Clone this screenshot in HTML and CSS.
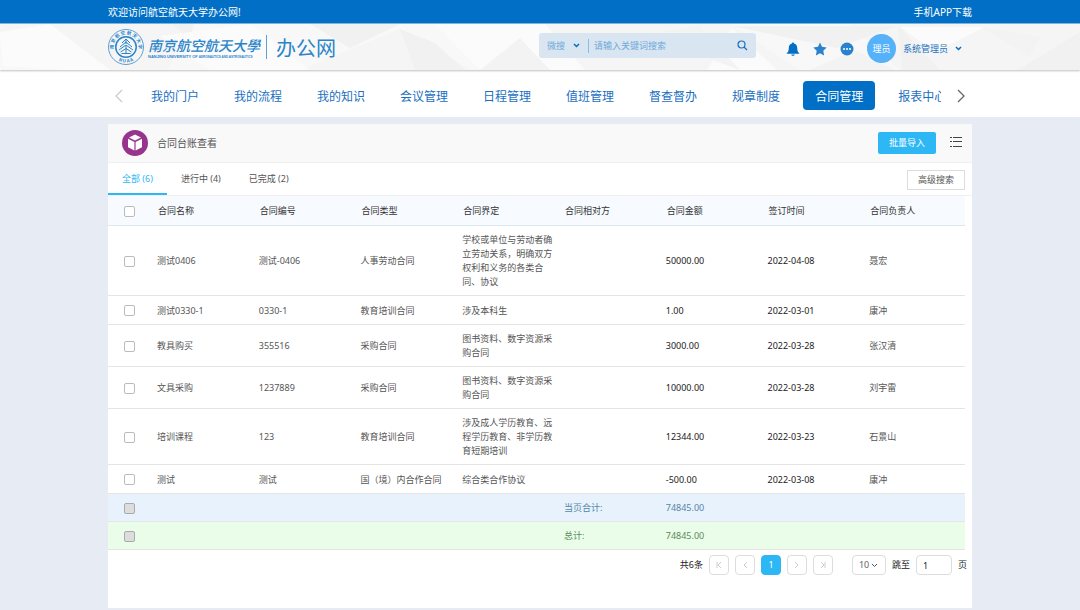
FILE: index.html
```html
<!DOCTYPE html>
<html lang="zh-CN">
<head>
    <meta charset="UTF-8">
    <meta name="viewport" content="width=device-width, initial-scale=1.0">
    <title>合同台账查看</title>
    <link rel="stylesheet" href="styles.css">
</head>
<body>
    <div class="topbar">
        <div class="container topbar-inner">
            <span>欢迎访问航空航天大学办公网!</span>
            <a href="#">手机APP下载</a>
        </div>
    </div>

    <header class="header">
        <svg class="header-bg" viewBox="0 0 1080 46" preserveAspectRatio="none" aria-hidden="true">
            <path fill="#f5f5f5" d="M0 0h190l-22 46H70L3 25zM300 46 400 5l70 41zM540 0h190l70 46H580zM850 0h230v46H900z"/>
            <path fill="#f1f1f1" d="M172 0h22l-4 16zM310 0h90l-50 24zM400 5l35 14 30 27h-50zM732 2h165l-60 22zM898 2l42 44h-38zM1018 46l62-38v38z"/>
            <path fill="#fbfbfb" d="M0 8 50 0 110 46H66L3 42zM160 12 250 0l60 46H210zM435 0h110l40 46H480zM732 4l45 42h-70zM900 3l85 0-50 25z"/>
            <path fill="#f3f3f3" d="M480 46 520 14l30 32zM640 10l60-8 40 44zM810 46l45-20 40 20zM980 3l60 10-10 20z"/>
        </svg>
        <div class="container header-inner">
            <a class="brand" href="#">
                <svg class="seal" viewBox="0 0 72 72" fill="none" stroke="#2a84c9" aria-hidden="true">
                    <defs>
                        <path id="ring-top" d="M15 49.500A25 25 0 1 1 57 49.500"/>
                        <path id="ring-bottom" d="M8 50A31.500 31.500 0 0 0 64 50"/>
                    </defs>
                    <circle cx="36" cy="36" r="35" stroke-width="1.500"/>
                    <circle cx="36" cy="36" r="20.500" stroke-width="3"/>
                    <g fill="#2a84c9" stroke="none" font-family="Noto Sans CJK SC, sans-serif" font-weight="700">
                        <text font-size="9"><textPath href="#ring-top" startOffset="50%" text-anchor="middle">南 京 航 空 航 天 大 学</textPath></text>
                        <text font-size="9"><textPath href="#ring-bottom" startOffset="50%" text-anchor="middle">N U A A</textPath></text>
                    </g>
                    <path stroke-width="2" d="M36 20v10M36 20l-8 8M36 20l8 8M36 26l-12 10M36 26l12 10M36 32 22 42M36 32l14 10M36 39l-11 7M36 39l11 7M27 49h18M36 34v15"/>
                </svg>
                <span class="brand-name">
                    <span class="brand-cn">南京航空航天大學</span>
                    <span class="brand-en">NANJING UNIVERSITY OF <small>AERONAUTICS AND ASTRONAUTICS</small></span>
                </span>
                <span class="brand-site">办公网</span>
            </a>

            <form class="search">
                <select class="search-type" aria-label="搜索类型">
                    <option>微搜</option>
                </select>
                <svg class="caret" viewBox="0 0 7 5" aria-hidden="true"><path d="M1 1l2.500 2.500L6 1"/></svg>
                <input class="search-input" type="text" placeholder="请输入关键词搜索" aria-label="关键词">
                <button class="icon-btn" type="button" aria-label="搜索">
                    <svg width="11" height="11" viewBox="0 0 11 11" fill="none" stroke="#1a70bf" stroke-width="1.200"><circle cx="4.500" cy="4.500" r="3.500"/><path d="M7 7l3 3"/></svg>
                </button>
            </form>

            <div class="tools">
                <button class="icon-btn" type="button" aria-label="消息">
                    <svg width="14" height="14" viewBox="0 0 14 14" fill="#006fc5"><path d="M7 0.500c.6 0 1 .4 1 1 2 .5 3.200 2 3.200 4.200 0 2.800.5 4.200 2 5.300v.7H.8V11c1.500-1.100 2-2.500 2-5.300C2.800 3.500 4 2 6 1.500c0-.6.4-1 1-1zM5.200 12.400h3.600c-.2.800-.9 1.300-1.800 1.300s-1.600-.5-1.800-1.300z"/></svg>
                </button>
                <button class="icon-btn" type="button" aria-label="收藏">
                    <svg width="14" height="14" viewBox="0 0 14 14" fill="#2a82cf"><path d="M7 .5l2 4.300 4.700.6-3.400 3.300.8 4.800L7 11.200l-4.100 2.300.8-4.800L.3 5.400 5 4.800z"/></svg>
                </button>
                <button class="icon-btn" type="button" aria-label="更多">
                    <svg width="14" height="14" viewBox="0 0 14 14"><circle cx="7" cy="7" r="6.500" fill="#2a82cf"/><g fill="#fff"><circle cx="4" cy="7" r="1"/><circle cx="7" cy="7" r="1"/><circle cx="10" cy="7" r="1"/></g></svg>
                </button>
                <button class="user" type="button">
                    <span class="avatar">理员</span>
                    <span>系统管理员</span>
                    <svg class="caret" viewBox="0 0 7 5" aria-hidden="true"><path d="M1 1l2.500 2.500L6 1"/></svg>
                </button>
            </div>
        </div>
    </header>

    <nav class="nav">
        <div class="container nav-inner">
            <button class="nav-arrow prev" type="button" aria-label="上一页">
                <svg width="8" height="14" viewBox="0 0 8 14"><path d="M7 1 1 7l6 6"/></svg>
            </button>
            <div class="nav-list">
                <a href="#">我的门户</a>
                <a href="#">我的流程</a>
                <a href="#">我的知识</a>
                <a href="#">会议管理</a>
                <a href="#">日程管理</a>
                <a href="#">值班管理</a>
                <a href="#">督查督办</a>
                <a href="#">规章制度</a>
                <a href="#" class="active">合同管理</a>
                <a href="#">报表中心</a>
            </div>
            <button class="nav-arrow next" type="button" aria-label="下一页">
                <svg width="8" height="14" viewBox="0 0 8 14"><path d="M1 1l6 6-6 6"/></svg>
            </button>
        </div>
    </nav>

    <main class="container card">
        <div class="card-head">
            <svg class="card-icon" viewBox="0 0 26 26" aria-hidden="true">
                <circle cx="13" cy="13" r="13" fill="#97358d"/>
                <path fill="#fff" d="M13 4.500l6 3-6 3-6-3zM6 8.800l6.400 3.200v8.500L6 17.300zM20 8.800 13.600 12v8.500l6.400-3.200z"/>
            </svg>
            <h1>合同台账查看</h1>
            <button class="btn-primary" type="button">批量导入</button>
            <button class="icon-btn list-btn" type="button" aria-label="列表">
                <svg width="12" height="12" viewBox="0 0 12 12" fill="#444"><path d="M0 1h2v1H0zM3 1h9v1H3zM0 5h2v1H0zM3 5h9v1H3zM0 10h2v1H0zM3 10h9v1H3z"/></svg>
            </button>
        </div>

        <div class="tabs">
            <a href="#" class="active">全部 (6)</a>
            <a href="#">进行中 (4)</a>
            <a href="#">已完成 (2)</a>
            <button class="btn-default" type="button">高级搜索</button>
        </div>

        <div class="table-wrap">
            <table>
                <thead>
                    <tr>
                        <th class="check"><input type="checkbox" aria-label="全选"></th>
                        <th>合同名称</th>
                        <th>合同编号</th>
                        <th>合同类型</th>
                        <th>合同界定</th>
                        <th>合同相对方</th>
                        <th>合同金额</th>
                        <th>签订时间</th>
                        <th>合同负责人</th>
                    </tr>
                </thead>
                <tbody>
                    <tr>
                        <td class="check"><input type="checkbox" aria-label="测试0406"></td>
                        <td>测试0406</td>
                        <td>测试-0406</td>
                        <td>人事劳动合同</td>
                        <td>学校或单位与劳动者确立劳动关系，明确双方权利和义务的各类合同、协议</td>
                        <td></td>
                        <td class="dark">50000.00</td>
                        <td class="dark">2022-04-08</td>
                        <td>聂宏</td>
                    </tr>
                    <tr>
                        <td class="check"><input type="checkbox" aria-label="测试0330-1"></td>
                        <td>测试0330-1</td>
                        <td>0330-1</td>
                        <td>教育培训合同</td>
                        <td>涉及本科生</td>
                        <td></td>
                        <td class="dark">1.00</td>
                        <td class="dark">2022-03-01</td>
                        <td>康冲</td>
                    </tr>
                    <tr>
                        <td class="check"><input type="checkbox" aria-label="教具购买"></td>
                        <td>教具购买</td>
                        <td>355516</td>
                        <td>采购合同</td>
                        <td>图书资料、数字资源采购合同</td>
                        <td></td>
                        <td class="dark">3000.00</td>
                        <td class="dark">2022-03-28</td>
                        <td>张汉清</td>
                    </tr>
                    <tr>
                        <td class="check"><input type="checkbox" aria-label="文具采购"></td>
                        <td>文具采购</td>
                        <td>1237889</td>
                        <td>采购合同</td>
                        <td>图书资料、数字资源采购合同</td>
                        <td></td>
                        <td class="dark">10000.00</td>
                        <td class="dark">2022-03-28</td>
                        <td>刘宇雷</td>
                    </tr>
                    <tr>
                        <td class="check"><input type="checkbox" aria-label="培训课程"></td>
                        <td>培训课程</td>
                        <td>123</td>
                        <td>教育培训合同</td>
                        <td>涉及成人学历教育、远程学历教育、非学历教育短期培训</td>
                        <td></td>
                        <td class="dark">12344.00</td>
                        <td class="dark">2022-03-23</td>
                        <td>石景山</td>
                    </tr>
                    <tr>
                        <td class="check"><input type="checkbox" aria-label="测试"></td>
                        <td>测试</td>
                        <td>测试</td>
                        <td>国（境）内合作合同</td>
                        <td>综合类合作协议</td>
                        <td></td>
                        <td class="dark">-500.00</td>
                        <td class="dark">2022-03-08</td>
                        <td>康冲</td>
                    </tr>
                </tbody>
                <tfoot>
                    <tr class="page-sum">
                        <td class="check"><input type="checkbox" aria-label="当页合计" disabled></td>
                        <td></td><td></td><td></td><td></td>
                        <td>当页合计:</td>
                        <td>74845.00</td>
                        <td></td><td></td>
                    </tr>
                    <tr class="total-sum">
                        <td class="check"><input type="checkbox" aria-label="总计" disabled></td>
                        <td></td><td></td><td></td><td></td>
                        <td>总计:</td>
                        <td>74845.00</td>
                        <td></td><td></td>
                    </tr>
                </tfoot>
            </table>
        </div>

        <div class="pager">
            <span>共6条</span>
            <button type="button" aria-label="首页" disabled><svg viewBox="0 0 8 8"><path d="M2 1v6M6 1 3 4l3 3"/></svg></button>
            <button type="button" aria-label="上一页" disabled><svg viewBox="0 0 8 8"><path d="M6 1 3 4l3 3"/></svg></button>
            <button type="button" class="current">1</button>
            <button type="button" aria-label="下一页" disabled><svg viewBox="0 0 8 8"><path d="M2 1l3 3-3 3"/></svg></button>
            <button type="button" aria-label="末页" disabled><svg viewBox="0 0 8 8"><path d="M2 1l3 3-3 3M6 1v6"/></svg></button>
            <div class="page-size">
                <select aria-label="每页条数">
                    <option>10</option>
                </select>
                <svg viewBox="0 0 7 5" aria-hidden="true"><path d="M1 1l2.500 2.500L6 1"/></svg>
            </div>
            <label for="jump">跳至</label>
            <input id="jump" type="text" value="1">
            <span>页</span>
        </div>
    </main>
</body>
</html>
```
FILE: styles.css
```css
* {
    box-sizing: border-box;
}

body {
    margin: 0;
    background: #e6ebf4;
    color: #555;
    font-family: "Noto Sans", "Noto Sans CJK SC", sans-serif;
    font-size: 9px;
    line-height: 14px;
}

a {
    color: inherit;
    text-decoration: none;
}

button, input, select {
    font: inherit;
    color: inherit;
    margin: 0;
    padding: 0;
    border: 0;
    background: none;
    outline: none;
}

button {
    cursor: pointer;
}

svg {
    display: block;
}

select {
    appearance: none;
}

.container {
    width: 80%;
    margin: 0 auto;
}

.icon-btn {
    display: flex;
}

.caret {
    width: 7px;
    height: 5px;
    fill: none;
    stroke: #006fc5;
    stroke-width: 1.5;
}

/* top bar */
.topbar {
    background: #006fc5;
    color: #fff;
    font-size: 10px;
    border-bottom: 1px solid #7fb7e2;
}

.topbar-inner {
    display: flex;
    justify-content: space-between;
    align-items: center;
    height: 23px;
}

/* header */
.header {
    position: relative;
    background: #f8f8f8;
    box-shadow: 0 1px 2px rgba(0, 0, 0, 0.25);
}

.header-bg {
    position: absolute;
    top: 0;
    left: 0;
    width: 100%;
    height: 100%;
}

.header-inner {
    position: relative;
    display: flex;
    align-items: center;
    height: 46px;
}

.brand {
    display: flex;
    align-items: center;
    color: #2a84c9;
}

.seal {
    width: 36px;
    height: 36px;
}

.brand-name {
    display: flex;
    flex-direction: column;
    margin-left: 4px;
    padding-right: 6px;
    border-right: 1px solid #5b9fd6;
}

.brand-cn {
    font-family: "Noto Sans CJK TC", sans-serif;
    font-size: 14px;
    font-style: italic;
    font-weight: 500;
    line-height: 20px;
}

.brand-en {
    font-family: "Liberation Sans Narrow", "Liberation Sans", sans-serif;
    font-size: 4px;
    font-weight: 700;
    line-height: 4px;
    width: 112px;
    white-space: nowrap;
}

.brand-en small {
    font-size: 3px;
}

.brand-site {
    margin-left: 9px;
    padding-top: 4px;
    font-size: 20px;
    line-height: 24px;
}

.search {
    display: flex;
    align-items: center;
    width: 217px;
    height: 25px;
    margin: 0 0 3px auto;
    padding: 0 8px;
    border-radius: 3px;
    background: #d9e5f1;
    color: #6faadb;
}

.search-type {
    width: 26px;
}

.search-input {
    flex: 1;
    min-width: 0;
    margin-left: 8px;
    padding-left: 5px;
    border-left: 1px solid #8dbbe2;
}

.search-input::placeholder {
    color: #6faadb;
    opacity: 1;
}

.tools {
    display: flex;
    align-items: center;
    gap: 13px;
    margin-left: 30px;
    padding: 3px 10px 0 0;
}

.user {
    display: flex;
    align-items: center;
    gap: 7px;
    color: #1a70bf;
}

.avatar {
    width: 29px;
    height: 29px;
    border-radius: 50%;
    background: #55b1f9;
    color: #fff;
    line-height: 29px;
    text-align: center;
}

/* navigation */
.nav {
    padding: 11px 0 7px;
    background: #fff;
}

.nav-inner {
    display: flex;
}

.nav-arrow {
    display: flex;
    align-items: center;
    width: 31px;
    padding: 0 7px;
}

.nav-arrow svg {
    fill: none;
    stroke: #666;
    stroke-width: 1.3;
}

.nav-arrow.prev svg {
    stroke: #ccc;
}

.nav-arrow.next {
    justify-content: flex-end;
}

.nav-list {
    display: flex;
    flex: 1;
    gap: 11px;
    min-width: 0;
    overflow: hidden;
}

.nav-list a {
    flex: none;
    padding: 2px 12px 0;
    border-radius: 4px;
    color: #1a70bf;
    font-size: 12px;
    line-height: 27px;
}

.nav-list a.active {
    background: #006fc5;
    color: #fff;
}

/* card */
.card {
    margin-top: 7px;
    margin-bottom: 2px;
    padding-bottom: 33px;
    background: #fff;
}

.card-head {
    display: flex;
    align-items: center;
    height: 39px;
    padding: 0 10px 0 14px;
    background: #f9f9f9;
    border-bottom: 1px solid #f0f0f0;
}

.card-icon {
    width: 26px;
    height: 26px;
}

.card-head h1 {
    margin: 0 auto 0 9px;
    font-size: 10px;
    font-weight: 400;
}

.list-btn {
    padding-bottom: 2px;
}

.btn-primary {
    height: 22px;
    margin-right: 14px;
    padding: 0 11px;
    border-radius: 2px;
    background: #2db7f5;
    color: #fff;
}

.btn-default {
    height: 20px;
    margin: 2px 0 0 auto;
    padding: 0 10px;
    border: 1px solid #ddd;
    background: #fff;
}

.tabs {
    display: flex;
    align-items: center;
    padding-right: 7px;
    border-bottom: 1px solid #f0f0f0;
}

.tabs a {
    padding: 2px 14px 0;
    border-bottom: 2px solid transparent;
    line-height: 28px;
}

.tabs a.active {
    border-color: #2db7f5;
    color: #2db7f5;
}

/* table */
.table-wrap {
    padding-right: 7px;
}

table {
    width: 100%;
    table-layout: fixed;
    border-collapse: separate;
    border-spacing: 0;
}

th, td {
    padding: 7px 4px 6px 6px;
    border-bottom: 1px solid #e5e5e5;
    text-align: left;
    vertical-align: middle;
    font-weight: 400;
}

th {
    height: 30px;
    padding-left: 7px;
    background: #f7fbff;
    border-color: #dbe8f1;
    color: #333;
}

td {
    height: 29px;
}

tfoot td {
    height: 28px;
}

.check {
    width: 43px;
    padding-left: 0;
    padding-right: 0;
    text-align: center;
}

.check input {
    display: block;
    appearance: none;
    width: 11px;
    height: 11px;
    margin: 0 auto;
    border: 1px solid #bbb;
    border-radius: 2px;
    background: #fff;
}

.check input:disabled {
    border-color: #aaa;
    background: #ddd;
}

.dark {
    color: #222;
}

.page-sum td {
    background: #e7f2fc;
    color: #5586a8;
}

.total-sum td {
    background: #eafde8;
    color: #5c8a5c;
}

/* pagination */
.pager {
    display: flex;
    justify-content: flex-end;
    align-items: center;
    gap: 6px;
    padding: 5px 5px 0 0;
    color: #222;
}

.pager button,
.pager input,
.page-size {
    height: 20px;
    border: 1px solid #ddd;
    border-radius: 4px;
}

.pager button {
    display: flex;
    align-items: center;
    justify-content: center;
    width: 20px;
}

.pager button.current {
    border-color: #2db7f5;
    background: #2db7f5;
    color: #fff;
}

.pager svg {
    width: 8px;
    height: 8px;
    fill: none;
    stroke: #ccc;
}

.page-size {
    display: flex;
    align-items: center;
    width: 34px;
    margin-left: 13px;
    padding-left: 6px;
    color: #666;
}

.page-size select {
    width: 12px;
}

.pager .page-size svg {
    width: 7px;
    height: 5px;
    stroke: #555;
}

.pager input {
    width: 36px;
    padding: 0 6px;
}
```
